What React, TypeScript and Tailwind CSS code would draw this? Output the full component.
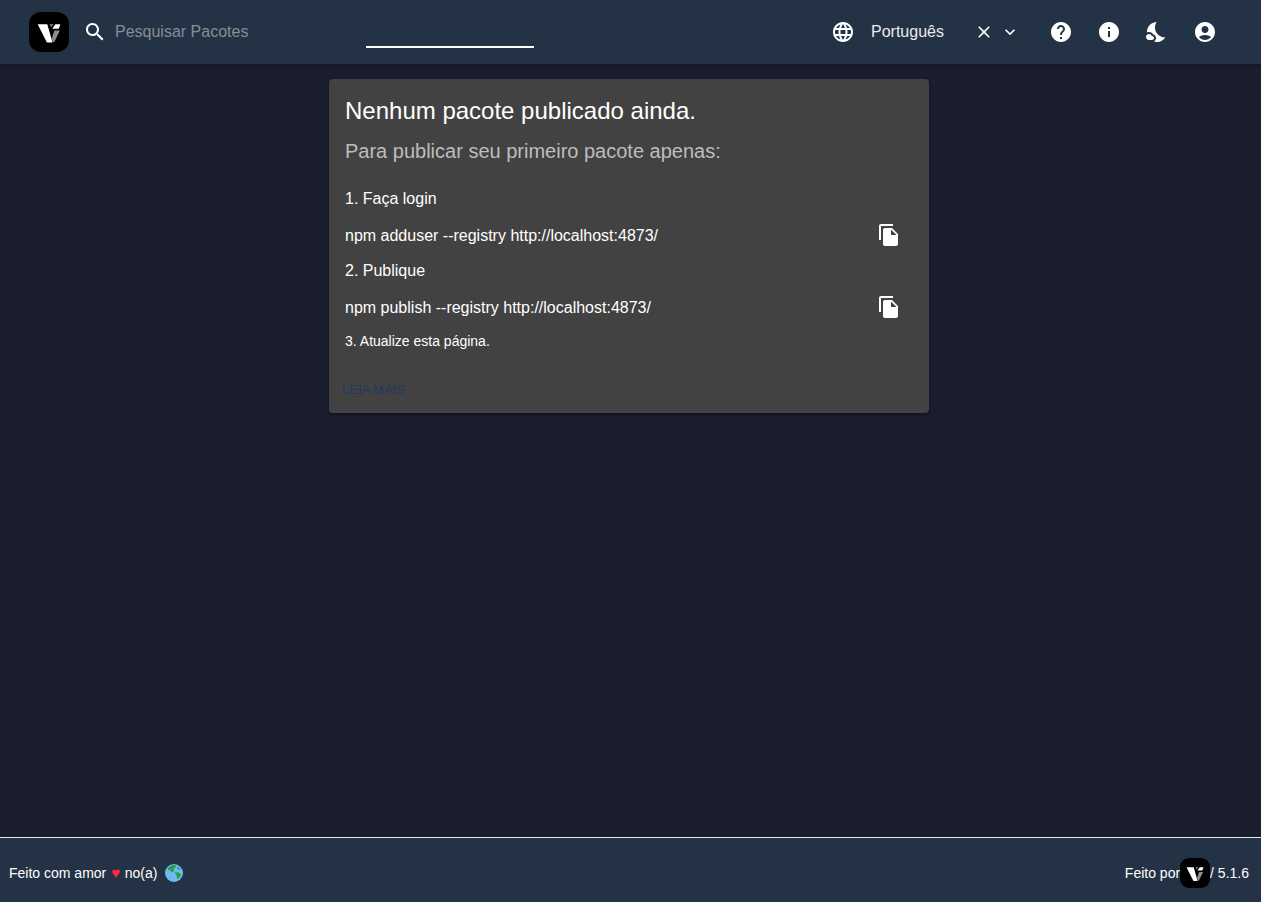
import React from "react";

function Icon({ d, size = 24, className = "" }: { d: string | string[]; size?: number; className?: string }) {
  const paths = Array.isArray(d) ? d : [d];
  return (
    <svg width={size} height={size} viewBox="0 0 24 24" fill="currentColor" className={"shrink-0 block " + className}>
      {paths.map((p, i) => (
        <path key={i} d={p} />
      ))}
    </svg>
  );
}

const SEARCH = "M15.5 14h-.79l-.28-.27C15.41 12.59 16 11.11 16 9.5 16 5.91 13.09 3 9.5 3S3 5.91 3 9.5 5.91 16 9.5 16c1.61 0 3.09-.59 4.23-1.57l.27.28v.79l5 4.99L20.49 19l-4.99-5zm-6 0C7.01 14 5 11.99 5 9.5S7.01 5 9.5 5 14 7.01 14 9.5 11.99 14 9.5 14z";
const LANGUAGE = "M11.99 2C6.47 2 2 6.48 2 12s4.47 10 9.99 10C17.52 22 22 17.52 22 12S17.52 2 11.99 2zm6.93 6h-2.95c-.32-1.25-.78-2.45-1.38-3.56 1.84.63 3.37 1.91 4.33 3.56zM12 4.04c.83 1.2 1.48 2.53 1.91 3.96h-3.82c.43-1.43 1.08-2.76 1.91-3.96zM4.26 14C4.1 13.36 4 12.69 4 12s.1-1.36.26-2h3.38c-.08.66-.14 1.32-.14 2 0 .68.06 1.34.14 2H4.26zm.82 2h2.95c.32 1.25.78 2.45 1.38 3.56-1.84-.63-3.37-1.9-4.33-3.56zm2.95-8H5.08c.96-1.66 2.49-2.93 4.33-3.56C8.81 5.55 8.35 6.75 8.03 8zM12 19.96c-.83-1.2-1.48-2.53-1.91-3.96h3.82c-.43 1.43-1.08 2.76-1.91 3.96zM14.34 14H9.66c-.09-.66-.16-1.32-.16-2 0-.68.07-1.35.16-2h4.68c.09.65.16 1.32.16 2 0 .68-.07 1.34-.16 2zm.25 5.56c.6-1.11 1.06-2.31 1.38-3.56h2.95c-.96 1.65-2.49 2.93-4.33 3.56zM16.36 14c.08-.66.14-1.32.14-2 0-.68-.06-1.34-.14-2h3.38c.16.64.26 1.31.26 2s-.1 1.36-.26 2h-3.38z";
const CLEAR = "M19 6.41 17.59 5 12 10.59 6.41 5 5 6.41 10.59 12 5 17.59 6.41 19 12 13.41 17.59 19 19 17.59 13.41 12z";
const EXPAND = "M16.59 8.59 12 13.17 7.41 8.59 6 10l6 6 6-6z";
const HELP = "M12 2C6.48 2 2 6.48 2 12s4.48 10 10 10 10-4.48 10-10S17.52 2 12 2zm1 17h-2v-2h2v2zm2.07-7.75l-.9.92C13.45 12.9 13 13.5 13 15h-2v-.5c0-1.1.45-2.1 1.17-2.83l1.24-1.26c.37-.36.59-.86.59-1.41 0-1.1-.9-2-2-2s-2 .9-2 2H8c0-2.21 1.79-4 4-4s4 1.79 4 4c0 .88-.36 1.68-.93 2.25z";
const INFO = "M12 2C6.48 2 2 6.48 2 12s4.48 10 10 10 10-4.48 10-10S17.52 2 12 2zm1 15h-2v-6h2v6zm0-8h-2V7h2v2z";
const NIGHT = [
  "M11.1 12.08c-2.33-4.51-.5-8.48.53-10.07C6.27 2.2 1.98 6.59 1.98 12c0 .14.02.28.02.42.62-.27 1.29-.42 2-.42 1.66 0 3.18.83 4.1 2.15C9.77 14.63 11 16.17 11 18c0 1.52-.87 2.83-2.12 3.51.98.32 2.03.5 3.11.5 3.5 0 6.58-1.8 8.37-4.52-2.36.23-6.98-.97-9.26-5.41z",
  "M7 16h-.18C6.4 14.84 5.3 14 4 14c-1.66 0-3 1.34-3 3s1.34 3 3 3h3c1.1 0 2-.9 2-2s-.9-2-2-2z",
];
const ACCOUNT = "M12 2C6.48 2 2 6.48 2 12s4.48 10 10 10 10-4.48 10-10S17.52 2 12 2zm0 4c1.93 0 3.5 1.57 3.5 3.5S13.93 13 12 13s-3.5-1.57-3.5-3.5S10.07 6 12 6zm0 14c-2.03 0-4.43-.82-6.14-2.88C7.55 15.8 9.68 15 12 15s4.45.8 6.14 2.12C16.43 19.18 14.03 20 12 20z";
const COPY = "M16 1H4c-1.1 0-2 .9-2 2v14h2V3h12V1zm-1 4 6 6v10c0 1.1-.9 2-2 2H7.99C6.89 23 6 22.1 6 21l.01-14c0-1.1.89-2 1.99-2h7zm-1 7h5.5L14 6.5V12z";

function Logo({ size }: { size: number }) {
  return (
    <div className="shrink-0 bg-black rounded-[30%]" style={{ width: size, height: size }}>
      <svg viewBox="0 0 40 40" width={size} height={size} className="block">
        <path d="M25.4 18.6h5.4L25.4 30h-1.6l-1-3.6z" fill="#8c8c8c" />
        <path d="M8.7 12.2h9.6l5.2 18.3h-5.6z" fill="#fff" />
        <path d="M26.4 12.2h5l-1.6 4.6h-6.6z" fill="#fff" />
        <path d="M20.6 12.2h4l-2.4 2.8z" fill="#8c8c8c" />
      </svg>
    </div>
  );
}

function CmdRow({ text }: { text: string }) {
  return (
    <div className="flex items-center h-10">
      <span className="flex-1 text-base leading-6">{text}</span>
      <span className="pr-[28px] text-white -translate-y-px">
        <Icon d={COPY} />
      </span>
    </div>
  );
}

export default function App() {
  return (
    <div className="min-h-[902px] h-[902px] flex flex-col bg-[#1a1d2e] text-white font-['Liberation_Sans',Arial,sans-serif]">
      <header className="h-16 shrink-0 flex items-center bg-[#243245] pl-[29px] shadow-[0_2px_4px_rgba(0,0,0,0.25)] z-10">
        <Logo size={40} />
        <Icon d={SEARCH} className="ml-[14px]" />
        <span className="ml-[8px] w-[251px] text-base text-[#868d96]">Pesquisar Pacotes</span>
        <div className="w-[168px] h-[2px] bg-white mt-[30px]" />
        <div className="ml-[297px] flex items-center">
          <Icon d={LANGUAGE} />
          <span className="ml-[16px] w-[103px] text-base text-[#e9ebed]">Português</span>
          <Icon d={CLEAR} size={20} className="mr-[6px]" />
          <Icon d={EXPAND} size={20} />
          <div className="ml-[29px] flex items-center gap-6">
            <Icon d={HELP} />
            <Icon d={INFO} />
            <Icon d={NIGHT} />
            <Icon d={ACCOUNT} />
          </div>
        </div>
      </header>

      <main className="flex-1 flex justify-center items-start">
        <section className="w-[600px] mt-[15px] ml-[-3px] h-[334px] bg-[#424242] rounded shadow-[0_2px_3px_rgba(0,0,0,0.4)] pl-4 pr-0 pt-4 flex flex-col">
          <h2 className="text-2xl leading-8">Nenhum pacote publicado ainda.</h2>
          <p className="mt-[8px] text-xl leading-8 text-[#bdbdbd]">Para publicar seu primeiro pacote apenas:</p>
          <p className="mt-[20px] text-base leading-6">1. Faça login</p>
          <div className="mt-[5px]"><CmdRow text="npm adduser --registry http://localhost:4873/" /></div>
          <p className="mt-[3px] text-base leading-6">2. Publique</p>
          <div className="mt-[5px]"><CmdRow text="npm publish --registry http://localhost:4873/" /></div>
          <p className="mt-[3px] text-sm leading-5">3. Atualize esta página.</p>
          <a className="ml-[-3px] mt-[31px] text-[13px] leading-4 text-[#1f3a5f]">LEIA MAIS</a>
        </section>
      </main>

      <footer className="h-[65px] shrink-0 border-t border-[#e8e8ee] bg-[#243245] flex items-center justify-between pl-[9px] pr-[12px] pt-[6px] text-sm">
        <div className="flex items-center">
          <span>Feito com amor</span>
          <span className="ml-[5px] w-[8.5px] text-[15px] leading-5 text-[#ff2a45]">♥</span>
          <span className="ml-[5px]">no(a)</span>
          <svg width="18" height="18" viewBox="0 0 18 18" className="ml-[8px] block">
            <circle cx="9" cy="9" r="9" fill="#70baf2" />
            <path d="M3 4 7.5.8l3.6.6-.6 2.4-2 1 .6 2.2-2 1.6L5.4 6.4 2.8 5.8z" fill="#2f9f3c" />
            <path d="M9.6 8.2l4.4.2 2.2 2.4-2.6 4.2-1.8-1.4-.4-2.6z" fill="#2f9f3c" />
            <path d="M12.6 2.6l2.4 1.8-.4 1.6-2.2-1z" fill="#2f9f3c" />
          </svg>
        </div>
        <div className="flex items-center">
          <span>Feito por</span>
          <Logo size={30} />
          <span>/ 5.1.6</span>
        </div>
      </footer>
    </div>
  );
}
